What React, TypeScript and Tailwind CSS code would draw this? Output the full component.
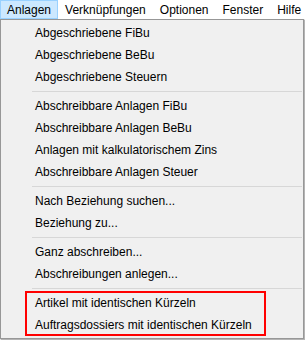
const MENUBAR = ['Anlagen', 'Verknüpfungen', 'Optionen', 'Fenster', 'Hilfe']

type Entry = string | null

const ITEMS: Entry[] = [
  'Abgeschriebene FiBu',
  'Abgeschriebene BeBu',
  'Abgeschriebene Steuern',
  null,
  'Abschreibbare Anlagen FiBu',
  'Abschreibbare Anlagen BeBu',
  'Anlagen mit kalkulatorischem Zins',
  'Abschreibbare Anlagen Steuer',
  null,
  'Nach Beziehung suchen...',
  'Beziehung zu...',
  null,
  'Ganz abschreiben...',
  'Abschreibungen anlegen...',
  null,
  'Artikel mit identischen Kürzeln',
  'Auftragsdossiers mit identischen Kürzeln',
]

function Item({ label }: { label: string }) {
  return <div className="h-[22px] shrink-0 flex items-center pl-[34px] text-black">{label}</div>
}

function Separator() {
  return (
    <div className="h-[7px] shrink-0 flex items-center pl-[31px] pr-[1px]">
      <div className="h-px w-full bg-[#d7d7d7]" />
    </div>
  )
}

export default function App() {
  return (
    <div
      className="w-[305px] h-[340px] bg-[#f0f0f0] text-[12px] overflow-hidden flex flex-col"
      style={{ fontFamily: '"Liberation Sans", Arial, sans-serif' }}
    >
      {/* menu bar */}
      <div className="h-[19px] bg-white flex items-stretch shrink-0">
        {MENUBAR.map((m, i) => (
          <div
            key={m}
            className={`flex items-center ${
              i === 0 ? 'bg-[#cce8ff] border border-[#99d1ff] px-[6px]' : 'px-[7px]'
            }`}
          >
            {m}
          </div>
        ))}
      </div>

      {/* dropdown */}
      <div className="relative w-[304px] h-[320px] shrink-0 border border-[#979797] bg-[#f0f0f0] pt-[2px] shadow-[1px_1px_1px_rgba(0,0,0,0.25)] flex flex-col">
        {ITEMS.map((it, i) => (it === null ? <Separator key={i} /> : <Item key={i} label={it} />))}
        {/* red annotation frame */}
        <div className="absolute left-[24px] top-[271px] w-[241px] h-[45px] border-2 border-[#ff0000]" />
      </div>
    </div>
  )
}
